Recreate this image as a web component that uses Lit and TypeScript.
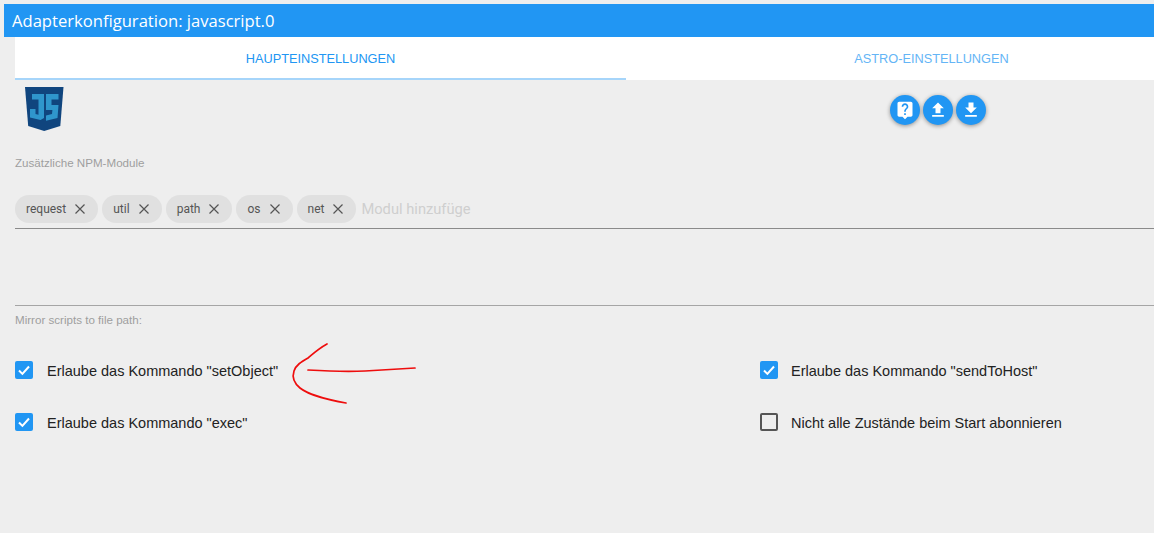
import { LitElement, html, css, svg } from "lit";
import { customElement } from "lit/decorators.js";

const P = {
  help: "M19 2H5c-1.11 0-2 .9-2 2v14c0 1.1.89 2 2 2h4l3 3 3-3h4c1.1 0 2-.9 2-2V4c0-1.1-.9-2-2-2zm-6 16h-2v-2h2v2zm2.07-7.75l-.9.92C13.45 11.9 13 12.5 13 14h-2v-.5c0-1.1.45-2.1 1.17-2.83l1.24-1.26c.37-.36.59-.86.59-1.41 0-1.1-.9-2-2-2s-2 .9-2 2H8c0-2.21 1.79-4 4-4s4 1.79 4 4c0 .88-.36 1.68-.93 2.25z",
  up: "M9 16h6v-6h4l-7-7-7 7h4zm-4 2h14v2H5z",
  down: "M19 9h-4V3H9v6H5l7 7 7-7zM5 18v2h14v-2H5z",
};

@customElement("app-root")
export class AppRoot extends LitElement {
  static styles = css`
    :host {
      display: block;
      position: relative;
      width: 1154px;
      height: 533px;
      overflow: hidden;
      background: #eeeeee;
      font-family: "Liberation Sans", Arial, sans-serif;
    }
    .title {
      margin: 4px 0 0 4px;
      height: 33px;
      box-sizing: border-box;
      padding-left: 8px;
      background: #2196f3;
      color: #fff;
      font: 16.6px/33px "Open Sans", sans-serif;
    }
    .main { padding-left: 15px; }
    .tabs { display: flex; height: 43px; background: #fff; }
    .tab {
      flex: none;
      width: 611px;
      box-sizing: border-box;
      text-align: center;
      font-size: 12.75px;
      line-height: 43px;
      color: #2196f3;
      border-bottom: 2px solid transparent;
    }
    .tab.on { border-bottom-color: #a6d5fa; }
    .tab.off { color: #64b5f6; }
    .head { display: flex; height: 59px; padding-top: 7px; box-sizing: border-box; }
    .logo { width: 39px; height: 45px; margin-left: 10px; display: block; flex: none; }
    .fabs { display: flex; gap: 3px; margin-left: 826px; padding-top: 8px; }
    .fab {
      width: 30px;
      height: 30px;
      border-radius: 50%;
      background: #2196f3;
      box-shadow: 0 1px 4px rgba(0, 0, 0, 0.4);
      display: flex;
      align-items: center;
      justify-content: center;
    }
    .fab svg { width: 20px; height: 20px; fill: #fff; display: block; }
    .label { font-size: 11.6px; line-height: 14px; color: #9e9e9e; }
    .npm { padding-top: 17px; }
    .chips {
      display: flex;
      align-items: center;
      gap: 4px;
      margin-top: 25px;
      height: 34px;
      box-sizing: border-box;
      padding-bottom: 5px;
      border-bottom: 1px solid #8a8a8a;
    }
    .chip {
      height: 28px;
      box-sizing: border-box;
      padding: 0 11px;
      display: flex;
      align-items: center;
      gap: 7px;
      border-radius: 14px;
      background: #e0e0e0;
      color: #555;
      font: 12px Roboto, sans-serif;
    }
    .chip svg { width: 14px; height: 14px; stroke: #555; stroke-width: 1.2; fill: none; display: block; }
    .ph { font: 14.7px Roboto, sans-serif; color: #cfcfcf; margin-left: 1px; }
    .mirror { margin-top: 76px; border-top: 1px solid #a5a5a5; padding-top: 7px; }
    .checks {
      margin-top: 34px;
      display: grid;
      grid-template-columns: 745px 1fr;
      grid-auto-rows: 52px;
    }
    .check { display: flex; align-items: center; height: 20px; font-size: 14.5px; color: #222; }
    .box {
      width: 18px;
      height: 18px;
      box-sizing: border-box;
      border-radius: 2px;
      background: #2196f3;
      margin-right: 14px;
      flex: none;
      position: relative;
      top: -1px;
    }
    .box svg { display: block; width: 18px; height: 18px; fill: none; stroke: #fff; stroke-width: 2; }
    .box.off { background: transparent; border: 2px solid #555; }
    .check.right .box { margin-right: 13px; }
    .ink { position: absolute; left: 0; top: 0; pointer-events: none; }
  `;

  private chip(t: string) {
    return html`<div class="chip">${t}<svg viewBox="0 0 14 14"><path d="M2.5 2.5l9 9M11.5 2.5l-9 9" /></svg></div>`;
  }

  private check(t: string, on: boolean, right = false) {
    return html`<div class="check ${right ? "right" : ""}">
      <div class="box ${on ? "" : "off"}">
        ${on ? html`<svg viewBox="0 0 18 18"><path d="M4 9.5l3.4 3.4L14 5.5" /></svg>` : ""}
      </div>
      ${t}
    </div>`;
  }

  render() {
    return html`
      <div class="title">Adapterkonfiguration: javascript.0</div>
      <div class="main">
        <div class="tabs">
          <div class="tab on">HAUPTEINSTELLUNGEN</div>
          <div class="tab off">ASTRO-EINSTELLUNGEN</div>
        </div>
        <div class="head">
          <svg class="logo" viewBox="0 0 39 45">
            <path fill="#10457e" d="M0 0h38.5l-3.2 39L19.2 44 3.2 39z" />
            <path fill="#2f96cc" d="M7 7h12v24l-3.5 2L5 30.5V22h5.5v5l3 .8V12.5H7z" />
            <path fill="#2f96cc" d="M21 7h12.5v5.5H26.500v5.500h7l-1 13-11.500 2.800v-5.300l6-1.500.4-4H21z" />
          </svg>
          <div class="fabs">
            ${[P.help, P.up, P.down].map(
              (d) => html`<div class="fab"><svg viewBox="0 0 24 24"><path d=${d} /></svg></div>`
            )}
          </div>
        </div>
        <div class="npm label">Zusätzliche NPM-Module</div>
        <div class="chips">
          ${["request", "util", "path", "os", "net"].map((c) => this.chip(c))}
          <span class="ph">Modul hinzufüge</span>
        </div>
        <div class="mirror label">Mirror scripts to file path:</div>
        <div class="checks">
          ${this.check('Erlaube das Kommando "setObject"', true)}
          ${this.check('Erlaube das Kommando "sendToHost"', true, true)}
          ${this.check('Erlaube das Kommando "exec"', true)}
          ${this.check("Nicht alle Zustände beim Start abonnieren", false, true)}
        </div>
      </div>
      <svg class="ink" width="1154" height="533" fill="none" stroke="#ee0d0d" stroke-width="1.7" stroke-linecap="round">
        ${svg`<path d="M327 344C318 349 314 353 308 358C301 362 296 365 294 371C292 377 294 383 300 388C310 396 330 400 346 403" />`}
        ${svg`<path d="M308 370C325 371 345 372 365 371C380 370 400 369 415 368" />`}
      </svg>
    `;
  }
}
